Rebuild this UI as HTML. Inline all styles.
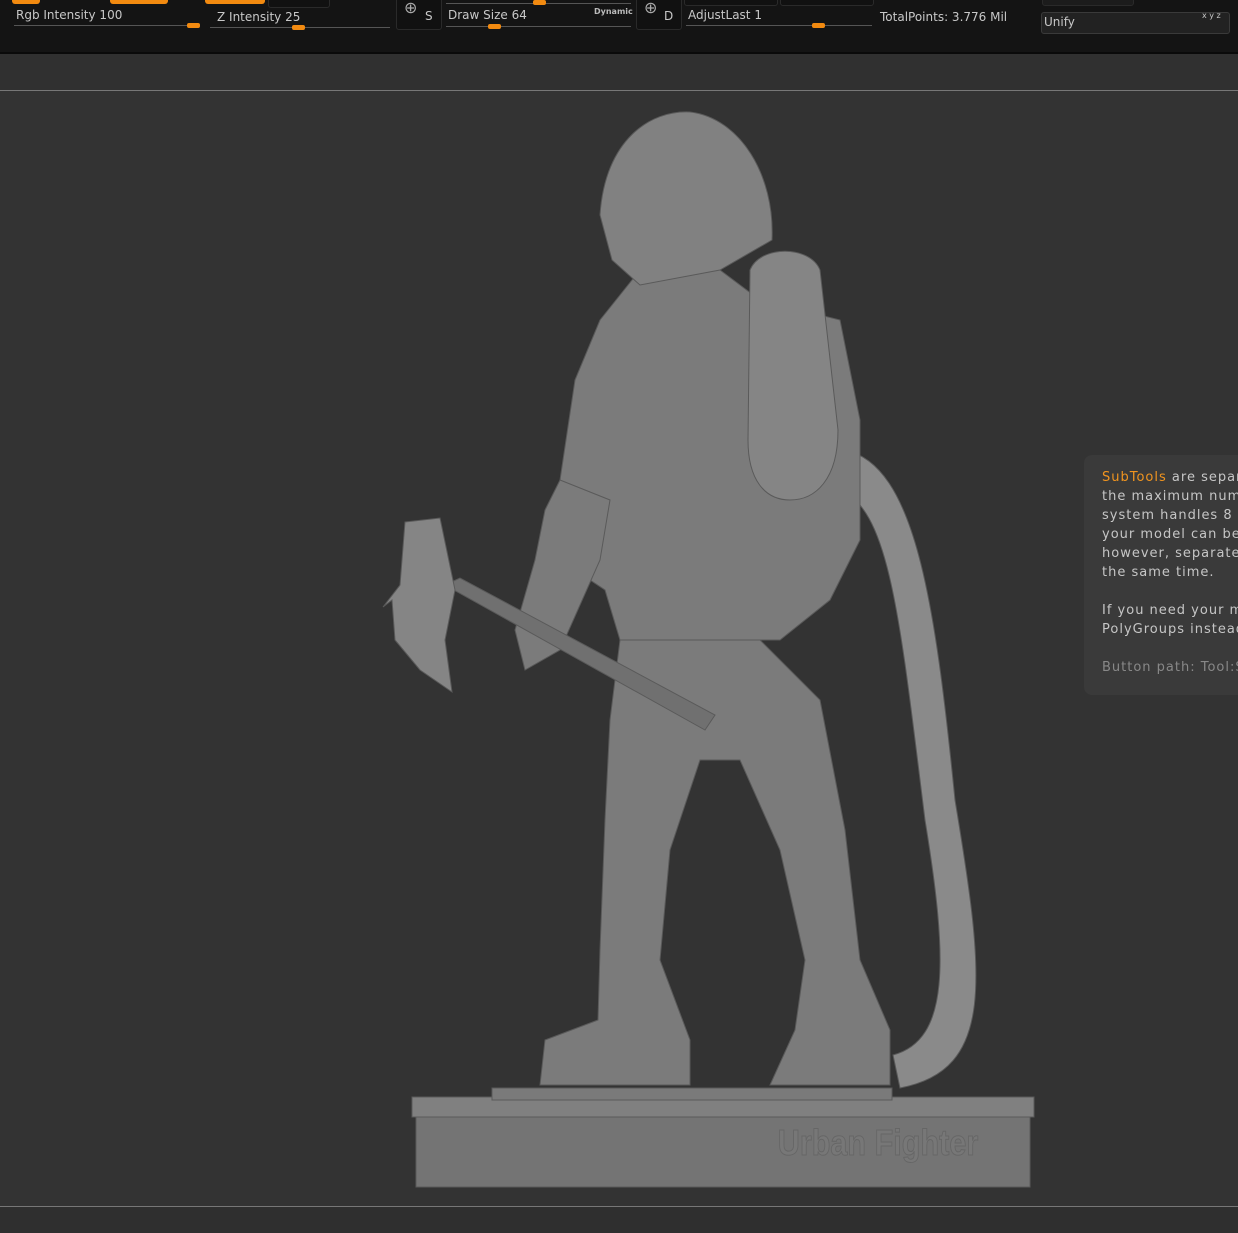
<!DOCTYPE html>
<html><head><style>
body{margin:0;width:1238px;height:1233px;background:#333;overflow:hidden;position:relative;font-family:"DejaVu Sans","Liberation Sans",sans-serif;}
#top{position:absolute;left:0;top:0;width:1238px;height:52px;background:#141414;border-bottom:2px solid #0a0a0a;}
.t{position:absolute;color:#c8c8c8;font-size:12px;white-space:nowrap}
.sl{position:absolute;height:1px;background:#555}
.kn{position:absolute;width:13px;height:5px;background:#f28a10;border-radius:2px}
.ob{position:absolute;height:4px;background:#f28a10;border-radius:0 0 3px 3px;top:0}
.bx{position:absolute;border:1px solid #2a2a2a;background:#111;border-radius:3px}
.tip{position:absolute;left:1084px;top:455px;width:170px;height:240px;background:#3a3a3a;border-radius:8px;}
.tip p{margin:0;position:absolute;left:18px;color:#c6c6c6;font-size:13px;letter-spacing:1px;line-height:19px;white-space:nowrap}
</style></head><body>
<div id="top">
<div class="ob" style="left:12px;width:28px"></div>
<div class="ob" style="left:110px;width:58px"></div>
<div class="ob" style="left:205px;width:60px"></div>
<div class="bx" style="left:268px;top:-4px;width:60px;height:10px"></div>
<div class="t" style="left:16px;top:8px">Rgb Intensity 100</div>
<div class="sl" style="left:14px;top:25px;width:186px"></div><div class="kn" style="left:187px;top:23px"></div>
<div class="t" style="left:217px;top:10px">Z Intensity 25</div>
<div class="sl" style="left:210px;top:27px;width:180px"></div><div class="kn" style="left:292px;top:25px"></div>
<div class="bx" style="left:396px;top:-4px;width:44px;height:32px"></div>
<div class="t" style="left:404px;top:-2px;font-size:16px;color:#aaa">⊕</div><div class="t" style="left:425px;top:9px">S</div>
<div class="sl" style="left:446px;top:3px;width:185px"></div><div class="kn" style="left:533px;top:0px"></div>
<div class="t" style="left:448px;top:8px">Draw Size 64</div>
<div class="t" style="left:594px;top:7px;font-size:8px;font-weight:bold;color:#bbb">Dynamic</div>
<div class="sl" style="left:446px;top:26px;width:185px"></div><div class="kn" style="left:488px;top:24px"></div>
<div class="bx" style="left:636px;top:-4px;width:44px;height:32px"></div>
<div class="t" style="left:644px;top:-2px;font-size:16px;color:#aaa">⊕</div><div class="t" style="left:664px;top:9px">D</div>
<div class="bx" style="left:684px;top:-4px;width:92px;height:8px"></div>
<div class="bx" style="left:780px;top:-4px;width:92px;height:8px"></div>
<div class="t" style="left:688px;top:8px">AdjustLast 1</div>
<div class="sl" style="left:686px;top:25px;width:186px"></div><div class="kn" style="left:812px;top:23px"></div>
<div class="t" style="left:880px;top:10px;font-size:12px">TotalPoints: 3.776 Mil</div>
<div class="bx" style="left:1042px;top:-4px;width:90px;height:8px;background:#1c1c1c"></div>
<div class="bx" style="left:1041px;top:12px;width:187px;height:20px;background:#222;border-color:#3a3a3a"><span class="t" style="left:2px;top:2px">Unify</span><span class="t" style="left:160px;top:-2px;font-size:8px">x y z</span></div>
</div>
<div style="position:absolute;left:0;top:54px;width:1238px;height:36px;background:#303030"></div>
<div style="position:absolute;left:0;top:90px;width:1238px;height:1px;background:#777"></div>
<div style="position:absolute;left:0;top:1206px;width:1238px;height:1px;background:#777"></div>
<div style="position:absolute;left:0;top:1207px;width:1238px;height:26px;background:#2f2f2f"></div>

<svg style="position:absolute;left:0;top:0" width="1238" height="1233">
<g fill="#7b7b7b" stroke="#5a5a5a" stroke-width="1">
<rect x="412" y="1097" width="622" height="20" fill="#808080"/>
<rect x="416" y="1117" width="614" height="70" fill="#747474"/>
<rect x="492" y="1088" width="400" height="12" fill="#7a7a7a"/>
<path d="M845 450 C915 465 935 600 955 800 C985 980 995 1070 900 1088 L893 1055 C950 1040 948 960 925 820 C900 620 890 510 840 490 Z" fill="#8a8a8a"/>
<path d="M620 640 L760 640 L820 700 L845 830 L860 960 L890 1030 L890 1085 L770 1085 L795 1030 L805 960 L780 850 L740 760 L700 760 L670 850 L660 960 L690 1040 L690 1085 L540 1085 L545 1040 L598 1020 L600 950 L605 820 L610 720 Z"/>
<path d="M600 320 L640 270 L720 270 L760 300 L840 320 L860 420 L860 540 L830 600 L780 640 L620 640 L605 590 L560 560 L560 480 L575 380 Z"/>
<path d="M560 480 L610 500 L600 560 L560 650 L525 670 L515 630 L535 560 L545 510 Z"/>
<path d="M600 215 C605 140 650 110 690 112 C740 118 775 175 772 240 L720 270 L640 285 L612 260 Z" fill="#818181"/>
<path d="M750 270 C760 245 810 245 820 270 L838 430 C838 480 815 500 790 500 C765 500 748 480 748 440 Z" fill="#858585"/>
<path d="M445 585 L460 578 L715 715 L705 730 Z" fill="#707070"/>
<path d="M405 522 L440 518 L455 590 L445 640 L452 692 L420 670 L395 640 L392 600 L383 607 L400 585 Z" fill="#858585"/>
</g>
<text x="778" y="1155" font-family="Liberation Sans" font-weight="bold" font-size="36" fill="#777" stroke="#666" transform="scale(0.85,1) translate(137,0)">Urban Fighter</text>
</svg>

<div class="tip">
<p style="top:13px"><span style="color:#f0941f">SubTools</span> are separate</p>
<p style="top:32px">the maximum number</p>
<p style="top:51px">system handles 8 mil</p>
<p style="top:70px">your model can be</p>
<p style="top:89px">however, separate.</p>
<p style="top:108px">the same time.</p>
<p style="top:146px">If you need your mo</p>
<p style="top:165px">PolyGroups instead</p>
<p style="top:203px;color:#888">Button path: Tool:Sub</p>
</div>
</body></html>
